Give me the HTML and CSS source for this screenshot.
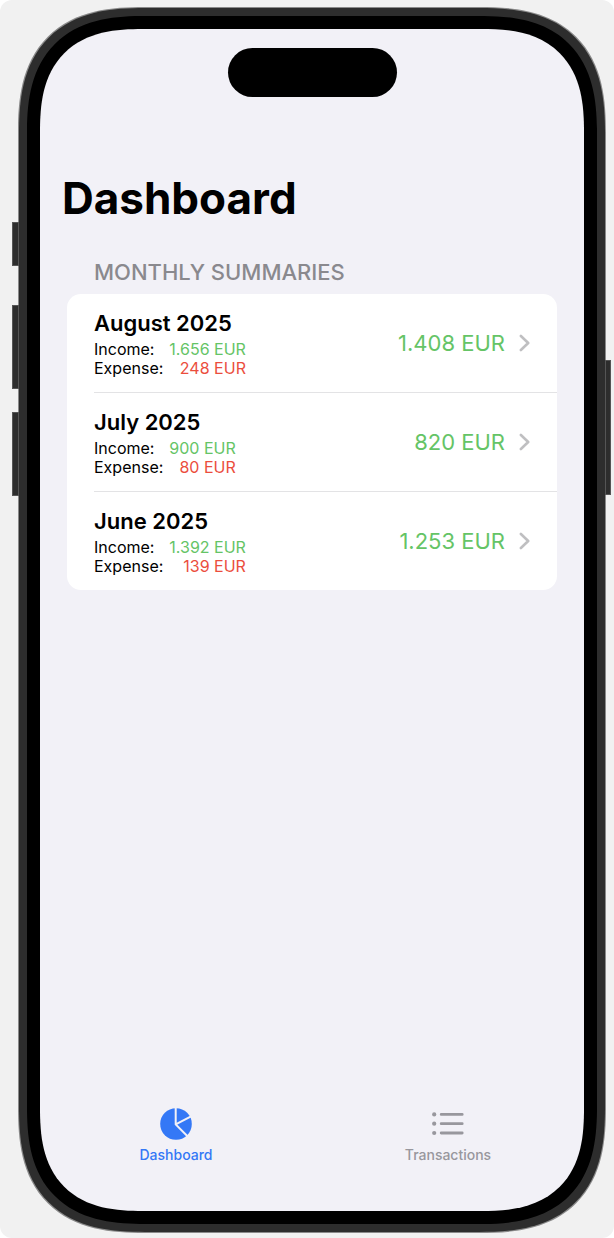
FILE: index.html
```html
<!DOCTYPE html>
<html lang="en">
<head>
<meta charset="utf-8">
<meta name="viewport" content="width=device-width, initial-scale=1">
<title>Dashboard</title>
<link rel="stylesheet" href="styles.css">
</head>
<body>
<div class="stage">
  <div class="device">
    <span class="key key-action"></span>
    <span class="key key-up"></span>
    <span class="key key-down"></span>
    <span class="key key-power"></span>
    <div class="screen">
      <div class="island"></div>
      <main class="content">
        <h1 class="title">Dashboard</h1>
        <section class="summaries">
          <h2 class="section-title">MONTHLY SUMMARIES</h2>
          <ul class="card">
            <li class="item">
              <a class="row" href="#august">
                <div class="info">
                  <h3 class="month">August 2025</h3>
                  <dl class="figures">
                    <dt>Income:</dt><dd class="income">1.656 EUR</dd>
                    <dt>Expense:</dt><dd class="expense">248 EUR</dd>
                  </dl>
                </div>
                <span class="total">1.408 EUR</span>
                <svg class="chevron" viewBox="0 0 11 18" aria-hidden="true"><path d="M1.9 2l7.3 7-7.3 7"/></svg>
              </a>
            </li>
            <li class="item">
              <a class="row" href="#july">
                <div class="info">
                  <h3 class="month">July 2025</h3>
                  <dl class="figures">
                    <dt>Income:</dt><dd class="income">900 EUR</dd>
                    <dt>Expense:</dt><dd class="expense">80 EUR</dd>
                  </dl>
                </div>
                <span class="total">820 EUR</span>
                <svg class="chevron" viewBox="0 0 11 18" aria-hidden="true"><path d="M1.9 2l7.3 7-7.3 7"/></svg>
              </a>
            </li>
            <li class="item">
              <a class="row" href="#june">
                <div class="info">
                  <h3 class="month">June 2025</h3>
                  <dl class="figures">
                    <dt>Income:</dt><dd class="income">1.392 EUR</dd>
                    <dt>Expense:</dt><dd class="expense">139 EUR</dd>
                  </dl>
                </div>
                <span class="total">1.253 EUR</span>
                <svg class="chevron" viewBox="0 0 11 18" aria-hidden="true"><path d="M1.9 2l7.3 7-7.3 7"/></svg>
              </a>
            </li>
          </ul>
        </section>
      </main>
      <nav class="tabs">
        <button class="tab tab-active" type="button">
          <svg class="tab-icon" viewBox="0 0 32 32" aria-hidden="true">
            <circle cx="16" cy="16" r="15.8" fill="currentColor"/>
            <path class="cut" d="M15.7 -1V16.4L28.5 29.2M15.7 16.4L32 7.8"/>
          </svg>
          <span>Dashboard</span>
        </button>
        <button class="tab" type="button">
          <svg class="tab-icon" viewBox="0 0 32 32" aria-hidden="true">
            <g fill="currentColor"><circle cx="2.2" cy="6.4" r="2.1"/><circle cx="2.2" cy="15.7" r="2.1"/><circle cx="2.2" cy="25" r="2.1"/></g>
            <path class="lines" d="M9.2 6.4H30.2M9.2 15.7H30.2M9.2 25H30.2"/>
          </svg>
          <span>Transactions</span>
        </button>
      </nav>
    </div>
  </div>
</div>
</body>
</html>
```
FILE: styles.css
```css
* { box-sizing: border-box; }

body {
  margin: 0;
  background: #fff;
  color: #000;
  font-family: Inter, "Liberation Sans", sans-serif;
}

h1, h2, h3, ul, dl, dd { margin: 0; padding: 0; }

.stage {
  display: flex;
  min-height: 100vh;
  padding: 8px 9px 6px 19px;
  border-radius: 12px;
  background: #f1f1f1;
}

.device {
  position: relative;
  display: flex;
  flex: 1;
  padding: 13px;
  border: 8px solid #2d2d2d;
  border-radius: 102px;
  background: #000;
  box-shadow: 0 0 0 1px #8a8a8a;
}

.screen {
  display: flex;
  flex: 1;
  flex-direction: column;
  border-radius: 84px;
  background: #f2f1f7;
}

@supports (corner-shape: superellipse(1.4)) {
  .device { border-radius: 126px; corner-shape: superellipse(1.37); }
  .screen { border-radius: 103px; corner-shape: superellipse(1.37); }
}

.key {
  position: absolute;
  left: -15px;
  width: 7px;
  border: 1px solid #555;
  background: #2d2d2d;
}

.key-action { top: 206px; height: 44px; }
.key-up { top: 289px; height: 84px; }
.key-down { top: 396px; height: 84px; }
.key-power { top: 344px; right: -14px; left: auto; width: 6px; height: 135px; }

.island {
  align-self: center;
  width: 169px;
  height: 49px;
  margin-top: 19px;
  border-radius: 25px;
  background: #000;
}

.content {
  flex: 1;
  padding: 73px 27px 0;
}

.title {
  margin-left: -5px;
  font-size: 44px;
  line-height: 56px;
  font-weight: 700;
}

.summaries { margin-top: 32px; }

.section-title {
  padding-left: 27px;
  color: #8a898e;
  font-size: 22px;
  line-height: 28px;
  font-weight: 500;
}

.card {
  margin-top: 8px;
  padding-left: 27px;
  border-radius: 14px;
  background: #fff;
  list-style: none;
}

.item + .item { border-top: 1px solid #e3e3e5; }

.row {
  display: flex;
  align-items: center;
  padding: 14px 27px 14px 0;
  color: inherit;
  text-decoration: none;
}

.info { flex: 1; }

.month {
  margin-bottom: 2px;
  font-size: 22px;
  line-height: 30px;
  font-weight: 600;
}

.figures {
  display: grid;
  grid-template-columns: max-content max-content;
  column-gap: 6px;
  font-size: 16px;
  line-height: 19px;
}

.figures dd { text-align: right; }
.income, .total { color: #65c466; }
.expense { color: #eb4e3d; }

.total {
  font-size: 22px;
  line-height: 28px;
}

.chevron {
  width: 11px;
  height: 18px;
  margin-left: 14px;
  fill: none;
  stroke: #bfbfc1;
  stroke-width: 2.6;
  stroke-linecap: round;
  stroke-linejoin: round;
}

.tabs {
  display: grid;
  grid-template-columns: 1fr 1fr;
  padding-bottom: 47px;
}

.tab {
  display: flex;
  flex-direction: column;
  align-items: center;
  gap: 6px;
  padding: 0;
  border: 0;
  background: none;
  color: #98979d;
  font: 500 14px/18px Inter, "Liberation Sans", sans-serif;
}

.tab-active { color: #3478f6; }

.tab-icon {
  width: 32px;
  height: 32px;
}

.cut {
  fill: none;
  stroke: #f2f1f7;
  stroke-width: 2;
}

.lines {
  fill: none;
  stroke: currentColor;
  stroke-width: 2.8;
  stroke-linecap: round;
}
```
